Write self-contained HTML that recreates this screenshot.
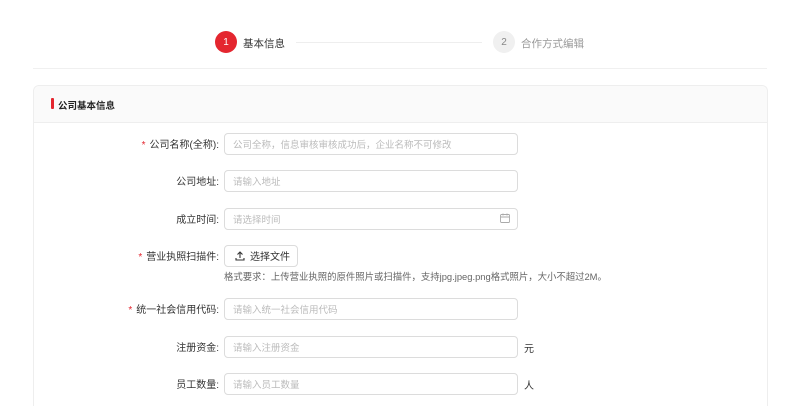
<!DOCTYPE html><html><head><meta charset="utf-8"><style>
html,body{margin:0;width:800px;height:406px;overflow:hidden}
body{background:#fff;font-family:"Liberation Sans","Noto Sans CJK SC",sans-serif;font-size:10px;color:#333;position:relative}
.a{position:absolute}
.circ{width:22px;height:22px;border-radius:50%;text-align:center;line-height:24px;font-size:10px}
.lbl{position:absolute;right:581px;text-align:right;white-space:nowrap;line-height:25px;font-size:10px}
.req{color:#e4262f;margin-right:4px}
.inp{position:absolute;left:224px;height:20px;border:1px solid #dcdcdc;border-radius:4px;color:#bbb;line-height:23px;padding-left:8px;width:284px;font-size:9.5px}
</style></head><body>
<div class="a circ" style="left:215px;top:31px;background:#e4262f;color:#fff">1</div>
<div class="a" style="left:243px;top:36px;font-size:10.5px;color:#333">基本信息</div>
<div class="a" style="left:296px;top:42px;width:186px;height:1px;background:#eee"></div>
<div class="a circ" style="left:493px;top:31px;background:#f0f0f0;color:#888">2</div>
<div class="a" style="left:521px;top:36px;font-size:10.5px;color:#999">合作方式编辑</div>
<div class="a" style="left:33px;top:68px;width:734px;height:1px;background:#f0f0f0"></div>
<div class="a" style="left:33px;top:85px;height:321px;border:1px solid #eee;border-bottom:none;border-radius:6px 6px 0 0;background:#fff;box-sizing:border-box;width:735px"></div>
<div class="a" style="left:34px;top:86px;width:733px;height:36px;background:#fafafa;border-bottom:1px solid #eee;border-radius:6px 6px 0 0"></div>
<div class="a" style="left:51px;top:98px;width:3px;height:11px;background:#e4262f;border-radius:1px"></div>
<div class="a" style="left:58px;top:98px;font-weight:bold;font-size:9.5px;color:#222">公司基本信息</div>

<div class="lbl" style="top:133px"><span class="req">*</span>公司名称(全称):</div>
<div class="inp" style="top:133px">公司全称，信息审核审核成功后，企业名称不可修改</div>
<div class="lbl" style="top:170px">公司地址:</div>
<div class="inp" style="top:170px">请输入地址</div>
<div class="lbl" style="top:208px">成立时间:</div>
<div class="inp" style="top:208px">请选择时间</div>
<svg class="a" style="left:500px;top:213px" width="10" height="10" viewBox="0 0 10 10" fill="none" stroke="#aaa" stroke-width="0.9"><rect x="0.5" y="1.5" width="9" height="8" rx="1"/><path d="M0.5 4h9M3 0.5v2M7 0.5v2"/></svg>
<div class="lbl" style="top:245px"><span class="req">*</span>营业执照扫描件:</div>
<div class="a" style="left:224px;top:245px;width:72px;height:20px;border:1px solid #dcdcdc;border-radius:4px;line-height:23px;color:#333"><svg style="position:absolute;left:10px;top:5px" width="10" height="10" viewBox="0 0 10 10" fill="none" stroke="#333" stroke-width="1.1"><path d="M5 7V1M2.5 3.5L5 1l2.5 2.5M1 7v2h8V7"/></svg><span style="position:absolute;left:25px">选择文件</span></div>
<div class="a" style="left:224px;top:269px;color:#666;font-size:9.4px">格式要求：上传营业执照的原件照片或扫描件，支持jpg.jpeg.png格式照片，大小不超过2M。</div>
<div class="lbl" style="top:298px"><span class="req">*</span>统一社会信用代码:</div>
<div class="inp" style="top:298px">请输入统一社会信用代码</div>
<div class="lbl" style="top:336px">注册资金:</div>
<div class="inp" style="top:336px">请输入注册资金</div>
<div class="a" style="left:524px;top:340px">元</div>
<div class="lbl" style="top:373px">员工数量:</div>
<div class="inp" style="top:373px">请输入员工数量</div>
<div class="a" style="left:524px;top:377px">人</div>
</body></html>
